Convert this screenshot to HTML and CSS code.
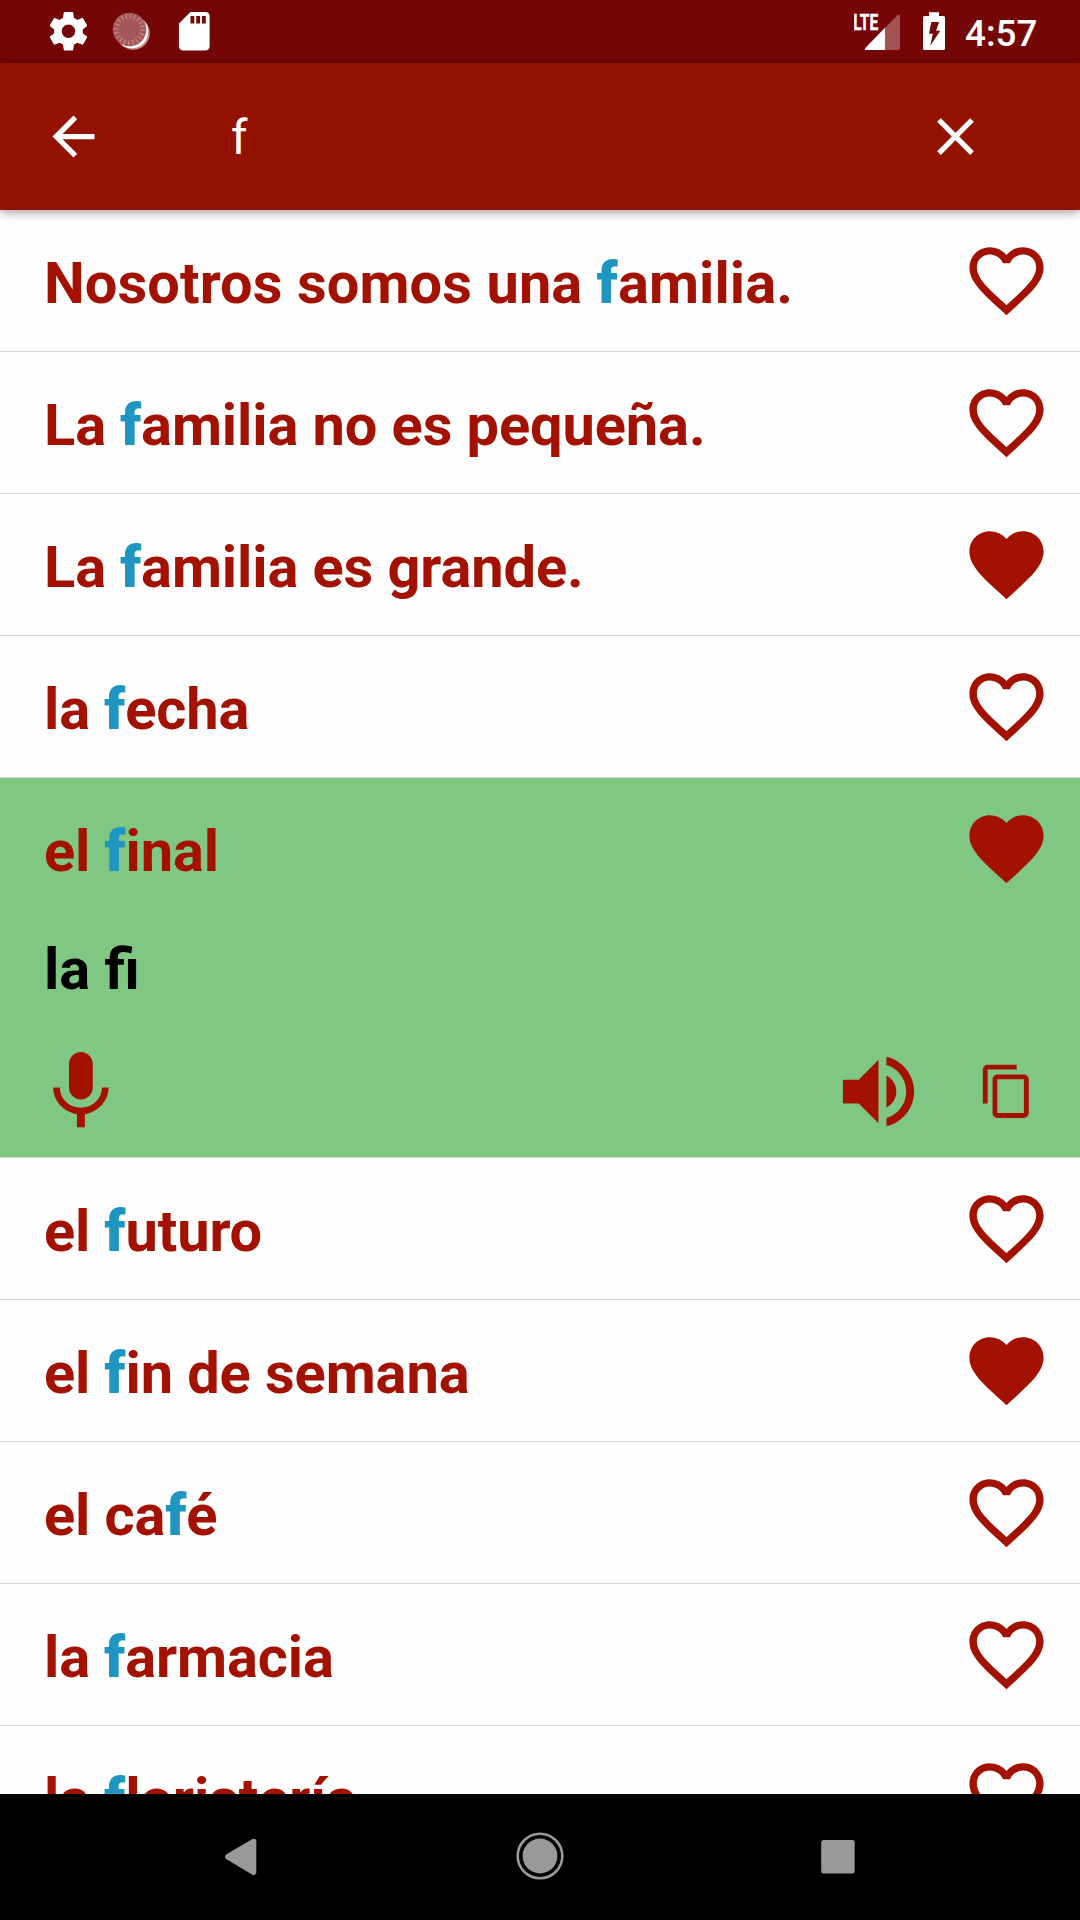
FILE: index.html
```html
<!DOCTYPE html>
<html lang="es">
<head>
<meta charset="utf-8">
<title>Vocabulario</title>
<link rel="stylesheet" href="styles.css">
</head>
<body>
<svg class="defs" aria-hidden="true">
  <symbol id="heart" viewBox="0 0 24 24"><path d="M12 21.35l-1.45-1.32C5.4 15.36 2 12.28 2 8.5 2 5.42 4.42 3 7.5 3c1.74 0 3.41.81 4.5 2.09C13.09 3.81 14.76 3 16.5 3 19.58 3 22 5.42 22 8.5c0 3.78-3.4 6.86-8.55 11.54L12 21.35z"/></symbol>
  <symbol id="heart-outline" viewBox="0 0 24 24"><path d="M16.5 3c-1.74 0-3.41.81-4.5 2.09C10.91 3.81 9.24 3 7.5 3 4.42 3 2 5.42 2 8.5c0 3.78 3.4 6.86 8.55 11.54L12 21.35l1.45-1.32C18.6 15.36 22 12.28 22 8.5 22 5.42 19.58 3 16.5 3zm-4.4 15.55l-.1.1-.1-.1C7.14 14.24 4 11.39 4 8.5 4 6.5 5.5 5 7.5 5c1.54 0 3.04.99 3.57 2.36h1.87C13.46 5.99 14.96 5 16.5 5c2 0 3.5 1.5 3.5 3.5 0 2.89-3.14 5.74-7.9 10.05z"/></symbol>
</svg>
<div class="screen">
  <header class="status">
    <svg class="status-icon" viewBox="-.25 -.15 24 24"><path d="M19.43 12.98c.04-.32.07-.64.07-.98s-.03-.66-.07-.98l2.11-1.65c.19-.15.24-.42.12-.64l-2-3.46c-.12-.22-.39-.3-.61-.22l-2.49 1c-.52-.4-1.08-.73-1.69-.98l-.38-2.65C14.46 2.18 14.25 2 14 2h-4c-.25 0-.46.18-.49.42l-.38 2.65c-.61.25-1.17.59-1.69.98l-2.49-1c-.23-.09-.49 0-.61.22l-2 3.46c-.13.22-.07.49.12.64l2.11 1.65c-.04.32-.07.65-.07.98s.03.66.07.98l-2.11 1.65c-.19.15-.24.42-.12.64l2 3.46c.12.22.39.3.61.22l2.49-1c.52.4 1.08.73 1.69.98l.38 2.65c.03.24.24.42.49.42h4c.25 0 .46-.18.49-.42l.38-2.65c.61-.25 1.17-.59 1.69-.98l2.49 1c.23.09.49 0 .61-.22l2-3.46c.12-.22.07-.49-.12-.64l-2.11-1.65zM12 15.5c-1.93 0-3.5-1.57-3.5-3.5s1.57-3.5 3.5-3.5 3.5 1.57 3.5 3.5-1.57 3.5-3.5 3.5z"/></svg>
    <svg class="status-sync" viewBox="0 0 38 38">
      <circle cx="21.2" cy="21.2" r="16.6" fill="#c58c8c"/>
      <circle cx="19.8" cy="19.8" r="16.4" fill="#fff"/>
      <circle cx="17.500" cy="17.500" r="16.8" fill="#a55656"/>
      <circle cx="17.500" cy="17.500" r="13.3" fill="none" stroke="#c48e8e" stroke-width="5" stroke-dasharray="1.1 3.078"/>
    </svg>
    <svg class="status-icon" viewBox="-.15 -.15 24 24"><path d="M18 2h-8L4 8v12c0 1.1.9 2 2 2h12c1.1 0 2-.9 2-2V4c0-1.1-.9-2-2-2zm-6 6h-2V4h2v4zm3 0h-2V4h2v4zm3 0h-2V4h2v4z"/></svg>
    <svg class="status-signal" viewBox="854 0 92 63">
      <path d="M866 50q-2-.4-.6-2L898 14.8q2-.8 2 1.4V48q0 2-2 2z" fill="#a35353"/>
      <path d="M885 27.8V50h-19q-2-.4-.6-2z"/>
      <text class="lte" x="853.2" y="29.6" textLength="25" lengthAdjust="spacingAndGlyphs">LTE</text>
      <path fill-rule="evenodd" d="M929 16v-3.7h10V16h4.4q1.600 0 1.600 1.600V48.400q0 1.600-1.600 1.600H924.600q-1.600 0-1.600-1.600V17.600q0-1.600 1.600-1.600zM931.300 22l-2.300 11.700h3.800l-2.500 12 10-15h-4.200l3-8.700z"/>
    </svg>
    <span class="clock">4:57</span>
  </header>
  <div class="toolbar">
    <svg class="tool-icon" viewBox="0 0 24 24"><path d="M20 11H7.830l5.590-5.590L12 4l-8 8 8 8 1.410-1.410L7.830 13H20z"/></svg>
    <span class="query">f</span>
    <svg class="tool-icon" viewBox="0 0 24 24"><path d="M19 6.410L17.590 5 12 10.590 6.410 5 5 6.410 10.590 12 5 17.590 6.410 19 12 13.410 17.590 19 19 17.590 13.410 12z"/></svg>
  </div>
  <main class="list">
    <div class="row"><p class="phrase phrase-loose">Nosotros somos una <b>f</b>amilia.</p><svg class="heart"><use href="#heart-outline"/></svg></div>
    <div class="row"><p class="phrase">La <b>f</b>amilia no es pequeña.</p><svg class="heart"><use href="#heart-outline"/></svg></div>
    <div class="row"><p class="phrase">La <b>f</b>amilia es grande.</p><svg class="heart"><use href="#heart"/></svg></div>
    <div class="row"><p class="phrase">la <b>f</b>echa</p><svg class="heart"><use href="#heart-outline"/></svg></div>
    <div class="entry">
      <div class="row row-open"><p class="phrase">el <b>f</b>inal</p><svg class="heart"><use href="#heart"/></svg></div>
      <p class="translation">la fi</p>
      <div class="actions">
        <svg class="mic" viewBox="-.1 0 24 24"><path d="M12 14c1.660 0 3-1.340 3-3V5c0-1.660-1.340-3-3-3S9 3.340 9 5v6c0 1.660 1.340 3 3 3zm5.300-3c0 3-2.540 5.100-5.300 5.100S6.700 14 6.700 11H5c0 3.410 2.720 6.230 6 6.720V21h2v-3.280c3.280-.48 6-3.300 6-6.720h-1.700z"/></svg>
        <svg class="speaker" viewBox="0 0 24 24"><path d="M3 9v6h4l5 5V4L7 9H3zm13.500 3c0-1.770-1.020-3.290-2.500-4.030v8.050c1.480-.73 2.500-2.250 2.500-4.020zM14 3.230v2.060c2.890.86 5 3.540 5 6.710s-2.110 5.850-5 6.710v2.060c4.010-.91 7-4.490 7-8.770s-2.990-7.860-7-8.770z"/></svg>
        <svg class="copy" viewBox="0 -.15 24 24"><path d="M16 1H4c-1.100 0-2 .9-2 2v14h2V3h12V1zm3 4H8c-1.100 0-2 .9-2 2v14c0 1.100.9 2 2 2h11c1.100 0 2-.9 2-2V7c0-1.100-.9-2-2-2zm0 16H8V7h11v14z"/></svg>
      </div>
    </div>
    <div class="row"><p class="phrase">el <b>f</b>uturo</p><svg class="heart"><use href="#heart-outline"/></svg></div>
    <div class="row"><p class="phrase">el <b>f</b>in de semana</p><svg class="heart"><use href="#heart"/></svg></div>
    <div class="row"><p class="phrase">el ca<b>f</b>é</p><svg class="heart"><use href="#heart-outline"/></svg></div>
    <div class="row"><p class="phrase">la <b>f</b>armacia</p><svg class="heart"><use href="#heart-outline"/></svg></div>
    <div class="row"><p class="phrase">la <b>f</b>loristería</p><svg class="heart"><use href="#heart-outline"/></svg></div>
  </main>
  <nav class="navbar">
    <svg class="nav-icon" viewBox="0 0 48 48"><path d="M8.500 22.200L34 7.300q4-1.500 4.300 2v31q-.3 4-4.300 2.300L8.500 27.200q-3-2.500 0-5z"/></svg>
    <svg class="nav-icon" viewBox="0 0 48 48"><circle cx="24" cy="24" r="22.300" fill="none" stroke="#999" stroke-width="2.600"/><circle cx="24" cy="24" r="17.400"/></svg>
    <svg class="nav-icon" viewBox="0 0 48 48"><rect x="7.200" y="8" width="33.500" height="33.600" rx="2.500"/></svg>
  </nav>
</div>
</body>
</html>
```

FILE: styles.css
```css
* {
  box-sizing: border-box;
}

body {
  margin: 0;
  font-family: Roboto, "Noto Sans", sans-serif;
  background: #fefefe;
}

svg {
  display: block;
  flex: none;
  fill: currentColor;
}

.defs {
  display: none;
}

.screen {
  width: 1080px;
  height: 1920px;
  display: flex;
  flex-direction: column;
  overflow: hidden;
}

.status {
  flex: none;
  height: 63px;
  display: flex;
  align-items: center;
  padding: 0 42px 1px 45px;
  background: #750606;
  color: #fff;
}

.status-icon {
  width: 46px;
  height: 46px;
}

.status-sync {
  width: 38px;
  height: 38px;
  margin: 0 21px;
}

.status-signal {
  width: 92px;
  height: 63px;
  margin-left: auto;
  align-self: flex-start;
}

.lte {
  font-size: 22.500px;
  font-weight: 700;
  stroke: #fff;
  stroke-width: .4px;
}

.clock {
  width: 73px;
  margin-left: 19px;
  padding-top: 5px;
  font-size: 36.750px;
  font-weight: 500;
  line-height: 43px;
}

.toolbar {
  flex: none;
  height: 147px;
  display: flex;
  align-items: center;
  padding: 0 93px 0 42px;
  background: #931200;
  color: #fff;
  box-shadow: 0 2px 10px rgba(0, 0, 0, .4);
  z-index: 1;
}

.tool-icon {
  width: 63px;
  height: 63px;
}

.query {
  flex: 1;
  margin-left: 126px;
  padding-top: 3px;
  font-size: 47.250px;
  line-height: 56px;
}

.list {
  flex: 1;
  min-height: 0;
  overflow: hidden;
  color: #a31200;
}

.row {
  height: 142px;
  display: flex;
  align-items: flex-start;
  justify-content: space-between;
  padding: 26px 29px 0 44px;
  border-bottom: 1px solid #d6d6d6;
}

.phrase,
.translation {
  margin: 0;
  font-size: 57.750px;
  font-weight: 700;
  line-height: 68px;
  letter-spacing: -.09px;
}

.phrase {
  padding-top: 13px;
  font-variant-ligatures: none;
}

.phrase-loose {
  letter-spacing: .1px;
}

/* Keeps the joined "fi" shape, which letter spacing would split. */
.translation {
  letter-spacing: normal;
}

.phrase b {
  color: #1f95c1;
}

.heart {
  width: 89px;
  height: 89px;
}

.entry {
  height: 380px;
  background: #81c784;
  border-bottom: 1px solid #d6d6d6;
}

.row-open {
  height: 141px;
  border-bottom: 0;
}

.translation {
  padding: 16px 44px 0;
  color: #000;
}

.actions {
  display: flex;
  align-items: center;
  padding: 41px 44px 0 33px;
}

.mic,
.speaker {
  width: 95px;
  height: 95px;
}

.speaker {
  margin-left: auto;
}

.copy {
  width: 58px;
  height: 58px;
  margin: 0 0 1px 52px;
}

.navbar {
  flex: none;
  height: 126px;
  display: flex;
  align-items: center;
  justify-content: space-between;
  padding: 0 218px 2px;
  background: #000;
  color: #999;
}

.nav-icon {
  width: 48px;
  height: 48px;
}
```
